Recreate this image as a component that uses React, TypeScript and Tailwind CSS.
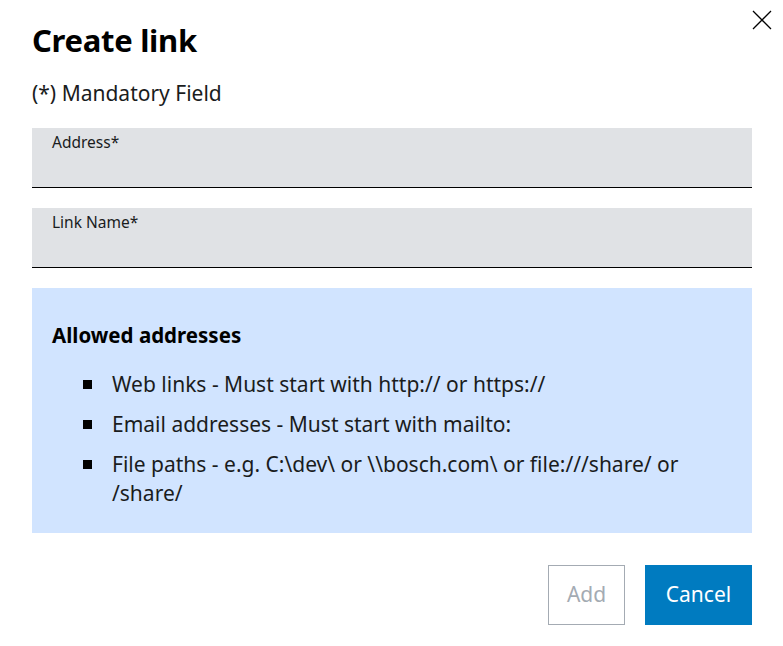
import React from "react";

const items = [
  "Web links - Must start with http:// or https://",
  "Email addresses - Must start with mailto:",
  "File paths - e.g. C:\\dev\\ or \\\\bosch.com\\ or file:///share/ or /share/",
];

function Field({ label }: { label: string }) {
  return (
    <div className="h-[60px] bg-[#e0e2e5] border-b border-black px-5 pt-[2px]">
      <span className="text-[15.5px] leading-[20px] text-[#1a1c1d]">{label}</span>
    </div>
  );
}

export default function App() {
  return (
    <div
      className="relative w-[783px] h-[646px] bg-white text-black"
      style={{ fontFamily: '"Noto Sans", "Open Sans", sans-serif' }}
    >
      <button className="absolute right-[11px] top-[10px] w-5 h-5 text-black" aria-label="Close">
        <svg viewBox="0 0 20 20" className="w-5 h-5" fill="none" stroke="currentColor" strokeWidth="1.3">
          <path d="M1 1 L19 19 M19 1 L1 19" />
        </svg>
      </button>

      <div className="pl-8 pr-[31px] pt-[22px]">
        <h2 className="text-[31px] leading-[36px] font-bold tracking-[-0.3px]">Create link</h2>
        <p className="mt-[23px] text-[21px] leading-[24px] text-[#1a1c1d]">(*) Mandatory Field</p>

        <div className="mt-[23px] flex flex-col gap-5">
          <Field label="Address*" />
          <Field label="Link Name*" />
        </div>

        <div className="mt-5 bg-[#d1e4ff] px-5 pt-[33px] pb-[25px]">
          <h3 className="text-[20.5px] leading-[29px] font-bold">Allowed addresses</h3>
          <ul className="mt-[20px] flex flex-col gap-[11px]">
            {items.map((t) => (
              <li key={t} className="flex text-[21px] leading-[29px] text-[#1a1c1d]">
                <span className="w-[9px] h-[9px] bg-black mt-[10px] ml-[31px] mr-[20px] shrink-0" />
                <span>{t}</span>
              </li>
            ))}
          </ul>
        </div>

        <div className="mt-8 flex justify-end gap-5">
          <button className="h-[60px] w-[77px] border border-[#a4abb3] text-[21px] text-[#a4abb3] bg-white">
            Add
          </button>
          <button className="h-[60px] w-[107px] bg-[#007bc0] text-[21px] text-white">Cancel</button>
        </div>
      </div>
    </div>
  );
}
